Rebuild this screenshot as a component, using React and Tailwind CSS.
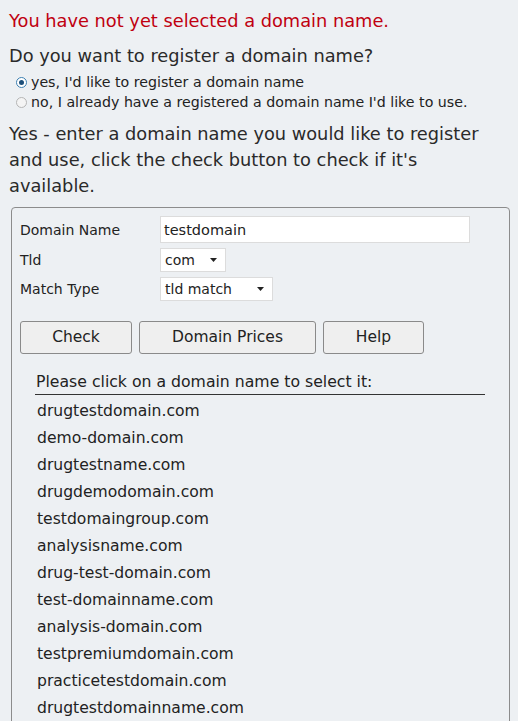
const domains = [
  'drugtestdomain.com',
  'demo-domain.com',
  'drugtestname.com',
  'drugdemodomain.com',
  'testdomaingroup.com',
  'analysisname.com',
  'drug-test-domain.com',
  'test-domainname.com',
  'analysis-domain.com',
  'testpremiumdomain.com',
  'practicetestdomain.com',
  'drugtestdomainname.com',
];

function Radio({ checked }) {
  return (
    <span
      className={
        'inline-flex h-[11px] w-[11px] items-center justify-center rounded-full border ' +
        (checked ? 'border-[#3c7fb1] bg-white' : 'border-[#b5b5b5] bg-[#f4f4f4]')
      }
    >
      {checked && <span className="h-[5px] w-[5px] rounded-full bg-[#1d4f7a]" />}
    </span>
  );
}

function Select({ value, width }) {
  return (
    <div className={'flex h-[24px] items-center justify-between border border-[#dcdcdc] bg-white pl-[4px] pr-[8px] ' + width}>
      <span>{value}</span>
      <svg width="7" height="4" viewBox="0 0 7 4">
        <path d="M0 0h7L3.5 4z" fill="#222" />
      </svg>
    </div>
  );
}

export default function App() {
  return (
    <div className="h-[721px] overflow-hidden bg-[#edf0f3] pl-[9px] pt-[8px] font-['DejaVu_Sans',sans-serif] text-[#333]">
      <div className="text-[17.8px] leading-[26px] text-[#c00010]">You have not yet selected a domain name.</div>
      <div className="mt-[9px] text-[17.8px] leading-[26px] text-[#2a2a2a]">Do you want to register a domain name?</div>
      <div className="mt-[3px] flex flex-col text-[14.2px] leading-[20px] text-[#222]">
        <label className="flex items-center gap-[4px] pl-[7px]">
          <Radio checked />
          <span>yes, I'd like to register a domain name</span>
        </label>
        <label className="flex items-center gap-[4px] pl-[7px]">
          <Radio />
          <span>no, I already have a registered a domain name I'd like to use.</span>
        </label>
      </div>
      <p className="mt-[9px] w-[478px] text-[17.8px] leading-[26px] text-[#2a2a2a]">
        Yes - enter a domain name you would like to register and use, click the check button to check if it's available.
      </p>
      <div className="mt-[8px] ml-[2px] mr-[8px] h-[600px] rounded-[4px] border border-[#8c8c8c] px-[8px] pt-[8px] text-[14px] text-[#222]">
        <div className="grid grid-cols-[140px_1fr] gap-y-[5px] leading-[20px]">
          <div className="pt-[4px]">Domain Name</div>
          <div className="flex h-[27px] w-[310px] items-center border border-[#dcdcdc] bg-white pl-[3px] text-[14.5px]">testdomain</div>
          <div className="pt-[2px]">Tld</div>
          <Select value="com" width="w-[66px]" />
          <div className="pt-[2px]">Match Type</div>
          <Select value="tld match" width="w-[113px]" />
        </div>
        <div className="mt-[20px] flex gap-[7px] text-[15.5px]">
          <button className="h-[33px] w-[112px] rounded-[3px] border border-[#8a8a8a] bg-[#efefef]">Check</button>
          <button className="h-[33px] w-[177px] rounded-[3px] border border-[#8a8a8a] bg-[#efefef]">Domain Prices</button>
          <button className="h-[33px] w-[101px] rounded-[3px] border border-[#8a8a8a] bg-[#efefef]">Help</button>
        </div>
        <div className="ml-[15px] mt-[16px] w-[450px] border-b border-[#333] pl-[1px] text-[15.7px] leading-[24px]">
          Please click on a domain name to select it:
        </div>
        <div className="ml-[17px] mt-[3px] flex flex-col text-[15.6px] leading-[27px]">
          {domains.map(d => (
            <div key={d}>{d}</div>
          ))}
        </div>
      </div>
    </div>
  );
}
